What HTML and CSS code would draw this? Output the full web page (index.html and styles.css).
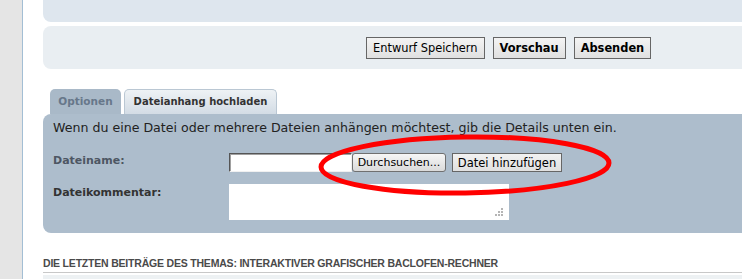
FILE: index.html
```html
<!DOCTYPE html>
<html lang="de">

<head>
    <meta charset="UTF-8">
    <meta name="viewport" content="width=device-width, initial-scale=1.0">
    <title>Beitrag schreiben</title>
    <link rel="stylesheet" href="styles.css">
</head>

<body>
    <div class="sidebar"></div>
    <div class="main">
        <div class="panel-top"></div>
        <div class="panel-buttons">
            <button class="btn">Entwurf Speichern</button>
            <button class="btn btn-bold">Vorschau</button>
            <button class="btn btn-bold">Absenden</button>
        </div>

        <div class="tabs">
            <div class="tab">Optionen</div>
            <div class="tab tab-active">Dateianhang hochladen</div>
        </div>
        <div class="attach-panel">
            <p class="attach-info">Wenn du eine Datei oder mehrere Dateien anhängen möchtest, gib die Details unten ein.</p>
            <div class="row">
                <label class="label label-light">Dateiname:</label>
                <div class="file-field">
                    <span class="file-box"></span>
                    <button class="btn-browse">Durchsuchen...</button>
                    <button class="btn-add">Datei hinzufügen</button>
                </div>
            </div>
            <div class="row">
                <label class="label">Dateikommentar:</label>
                <div class="comment-box">
                    <svg class="grip" width="8" height="8" viewBox="0 0 8 8">
                        <rect x="6" y="0" width="2" height="2" fill="#b5b5b5" />
                        <rect x="3" y="3" width="2" height="2" fill="#b5b5b5" />
                        <rect x="6" y="3" width="2" height="2" fill="#b5b5b5" />
                        <rect x="0" y="6" width="2" height="2" fill="#b5b5b5" />
                        <rect x="3" y="6" width="2" height="2" fill="#b5b5b5" />
                        <rect x="6" y="6" width="2" height="2" fill="#b5b5b5" />
                    </svg>
                </div>
            </div>
        </div>

        <h3 class="recent-title">DIE LETZTEN BEITRÄGE DES THEMAS: INTERAKTIVER GRAFISCHER BACLOFEN-RECHNER</h3>
        <div class="recent-panel"></div>
    </div>

    <!-- rote Markierung über dem Upload-Bereich -->
    <svg class="marker" width="300" height="66" viewBox="0 0 300 66">
        <ellipse cx="149" cy="32" rx="144" ry="28" fill="none" stroke="#ff0000" stroke-width="5" transform="rotate(-0.8 149 32)" />
    </svg>
</body>

</html>
```

FILE: styles.css
```css
body {
    margin: 0;
    padding: 0;
    display: flex;
    overflow: hidden;
    height: 279px;
    font-family: "DejaVu Sans", Verdana, sans-serif;
    background: #fff;
    position: relative;
}

.sidebar {
    width: 22px;
    flex-shrink: 0;
    background: #e5e5e5;
    border-right: 1px solid #a3bed4;
}

.main {
    flex: 1;
    padding-left: 20px;
    margin-right: -30px;
}

.panel-top {
    height: 22px;
    background: #dee6ee;
    border-radius: 0 0 8px 8px;
}

.panel-buttons {
    margin-top: 4px;
    height: 43px;
    background: #e9eef2;
    border-radius: 8px;
    display: flex;
    align-items: center;
    gap: 8px;
    padding-left: 323px;
}

.btn {
    font-family: "DejaVu Sans", Verdana, sans-serif;
    font-size: 11.4px;
    height: 22px;
    padding: 0 6px;
    border: 1px solid #666;
    background: linear-gradient(#f4f4f4, #e0e0e0);
    color: #000;
    margin-top: 1px;
}

.btn-bold {
    font-weight: bold;
}

.tabs {
    display: flex;
    gap: 3px;
    margin-top: 20px;
    padding-left: 7px;
    height: 25px;
}

.tab {
    width: 71px;
    box-sizing: border-box;
    background: #a9b9c8;
    border-radius: 5px 5px 0 0;
    font-size: 10.5px;
    font-weight: bold;
    color: #67778a;
    text-align: center;
    line-height: 25px;
}

.tab-active {
    width: 153px;
    font-size: 10px;
    background: linear-gradient(#eef2f5, #d3dce5);
    border: 1px solid #bac7d3;
    border-bottom: none;
    color: #333;
    line-height: 23px;
}

.attach-panel {
    background: #adbdcc;
    border-radius: 8px 0 0 8px;
    height: 119px;
    padding: 0 10px;
}

.attach-info {
    margin: 0;
    padding-top: 6px;
    font-size: 12.6px;
    color: #222;
    line-height: 16px;
}

.row {
    display: flex;
    align-items: flex-start;
}

.row + .row {
    margin-top: 12px;
}

.label {
    width: 176px;
    font-size: 11px;
    font-weight: bold;
    color: #333;
    padding-top: 2px;
}

.label-light {
    color: #4d5663;
}

.file-field {
    display: flex;
    align-items: center;
    margin-top: 17px;
}

.row:first-of-type .label {
    padding-top: 18px;
}

.file-box {
    width: 121px;
    height: 17px;
    background: #fff;
    border: 1px solid #f0f0f0;
    border-top-color: #555;
    border-left-color: #555;
    box-shadow: inset 1px 1px 0 #a0a0a0;
}

.btn-browse {
    font-family: Tahoma, "DejaVu Sans", sans-serif;
    font-size: 11px;
    height: 19px;
    width: 94px;
    padding: 0;
    margin-left: 0;
    border: 1px solid #707070;
    border-radius: 3px;
    background: linear-gradient(#f6f6f6, #dadada);
    color: #000;
}

.btn-add {
    font-family: "DejaVu Sans", Verdana, sans-serif;
    font-size: 11.5px;
    height: 19px;
    width: 110px;
    padding: 0;
    margin-left: 6px;
    border: 1px solid #666;
    background: linear-gradient(#f2f2f2, #e0e0e0);
    color: #000;
}

.comment-box {
    width: 280px;
    height: 36px;
    background: #fff;
    position: relative;
}

.grip {
    position: absolute;
    right: 6px;
    bottom: 4px;
}

.recent-title {
    margin: 24px 0 0;
    font-family: "Liberation Sans", Arial, sans-serif;
    font-size: 10.5px;
    font-weight: bold;
    color: #4a4a4a;
    padding-bottom: 3px;
    border-bottom: 1px solid #c8c8c8;
    letter-spacing: -0.2px;
}

.recent-panel {
    margin-top: 2px;
    height: 6px;
    background: #edf1f3;
}

.marker {
    position: absolute;
    left: 316px;
    top: 133px;
}
```
